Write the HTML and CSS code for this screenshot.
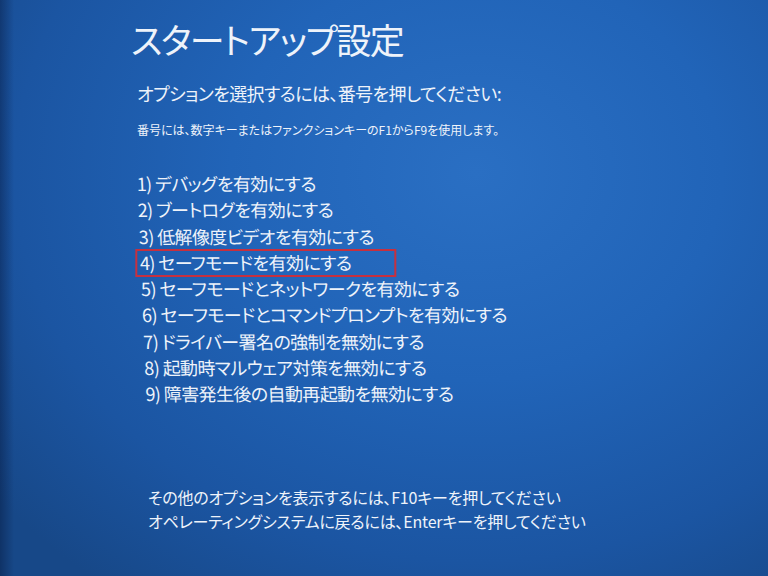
FILE: index.html
```html
<!DOCTYPE html>
<html lang="ja">

<head>
    <meta charset="UTF-8">
    <meta name="viewport" content="width=device-width, initial-scale=1.0">
    <title>スタートアップ設定</title>
    <link rel="stylesheet" href="styles.css">
</head>

<body>
<div class="screen">
    <div class="content">
        <h1 class="title">スタートアップ設定</h1>
        <p class="prompt">オプションを選択するには、番号を押してください:</p>
        <p class="note">番号には、数字キーまたはファンクションキーのF1からF9を使用します。</p>
        <ol class="options">
            <li>1) デバッグを有効にする</li>
            <li>2) ブートログを有効にする</li>
            <li>3) 低解像度ビデオを有効にする</li>
            <li class="marked">4) セーフモードを有効にする</li>
            <li>5) セーフモードとネットワークを有効にする</li>
            <li>6) セーフモードとコマンドプロンプトを有効にする</li>
            <li>7) ドライバー署名の強制を無効にする</li>
            <li>8) 起動時マルウェア対策を無効にする</li>
            <li>9) 障害発生後の自動再起動を無効にする</li>
        </ol>
        <div class="footer">
            <p>その他のオプションを表示するには、F10キーを押してください</p>
            <p>オペレーティングシステムに戻るには、Enterキーを押してください</p>
        </div>
    </div>
</div>
</body>

</html>
```

FILE: styles.css
```css
html, body {
    margin: 0;
    padding: 0;
}

body {
    width: 768px;
    height: 576px;
    overflow: hidden;
    font-family: "Noto Sans CJK JP", "Noto Sans", sans-serif;
    font-feature-settings: "palt";
    color: #eef3fa;
}

.screen {
    width: 768px;
    height: 576px;
    position: relative;
    background: radial-gradient(ellipse 80% 90% at 62% 30%, #2a6fc3 0%, #2164b8 40%, #1b55a2 75%, #174888 100%);
}

/* dark edge of the monitor bezel on the left */
.screen::before {
    content: "";
    position: absolute;
    left: 0;
    top: 0;
    bottom: 0;
    width: 14px;
    background: linear-gradient(to right, rgba(0, 10, 40, 0.35), rgba(0, 10, 40, 0));
}

.content {
    position: relative;
    padding: 14px 0 0 131px;
    display: flex;
    flex-direction: column;
}

.title {
    margin: 0;
    font-size: 35px;
    font-weight: 400;
    line-height: 50px;
    letter-spacing: -1.5px;
}

.prompt {
    margin: 15px 0 0 6px;
    font-size: 18px;
    line-height: 28px;
    letter-spacing: -0.6px;
}

.note {
    margin: 13px 0 0 6px;
    font-size: 12px;
    line-height: 20px;
}

.options {
    list-style: none;
    margin: 30px 0 0 5px;
    padding: 0;
    font-size: 18px;
    line-height: 26.3px;
    letter-spacing: -0.6px;
    transform: skewX(2.4deg);
    transform-origin: 0 0;
}

.options li {
    position: relative;
}

/* red box drawn over option 4 */
.marked::after {
    content: "";
    position: absolute;
    left: -4px;
    top: 0;
    width: 257px;
    height: 24px;
    border: 2px solid #c6303f;
    transform: skewX(-2.4deg);
    transform-origin: 0 0;
}

.footer {
    margin: 78px 0 0 17px;
    font-size: 16px;
    line-height: 24px;
    letter-spacing: -0.2px;
}

.footer p {
    margin: 0;
}
```
